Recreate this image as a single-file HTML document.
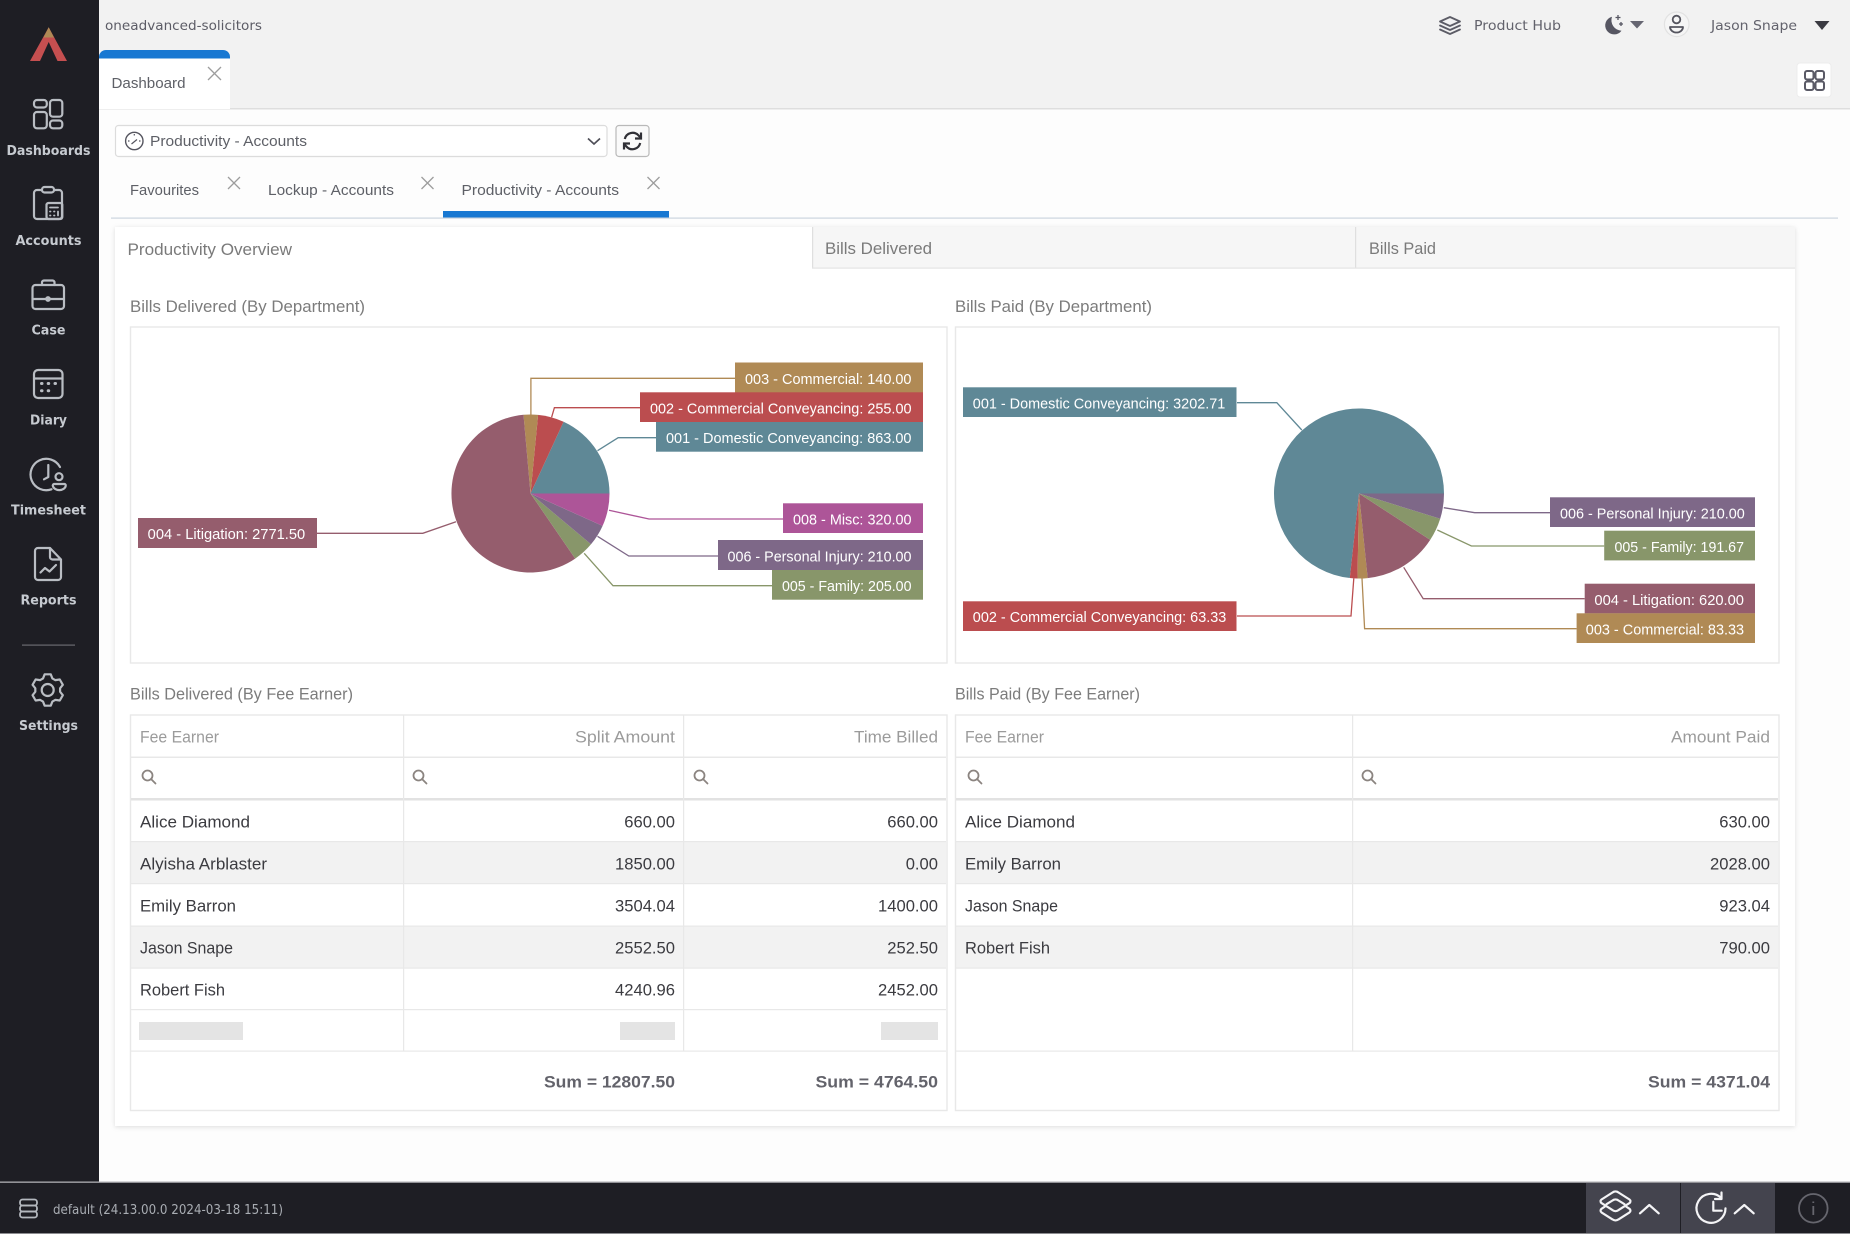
<!DOCTYPE html>
<html lang="en"><head><meta charset="utf-8"><title>Dashboard</title>
<style>
html,body{margin:0;padding:0;background:#fff;width:1850px;height:1234px;overflow:hidden}
svg{display:block}
text{font-family:"Liberation Sans",sans-serif;white-space:pre}
.m{font-family:"DejaVu Sans",sans-serif}
.nav{font-family:"DejaVu Sans",sans-serif;font-weight:700;font-size:13.5px;fill:#c6cad0;text-anchor:middle}
.ic{fill:none;stroke:#b9bdc3;stroke-width:2.2;stroke-linecap:round;stroke-linejoin:round}
.x{fill:none;stroke:#9d9d9d;stroke-width:1.3}
.tab{font-size:15px;fill:#5e6067}
.h{font-size:16.6px;fill:#7c7c7c}
.th{font-size:16.6px;fill:#9b9b9b}
.td{font-size:16.6px;fill:#3b3b40}
.r{text-anchor:end}
.sum{font-size:16.6px;font-weight:700;fill:#63636b;text-anchor:end}
.lb{font-size:14.6px;fill:#fff}
.ld{fill:none;stroke-width:1.3}
.b{fill:none;stroke:#e8e8e8;stroke-width:1.4}
.s{fill:none;stroke:#8b8480;stroke-width:1.8;stroke-linecap:round}
</style></head><body>
<svg xmlns="http://www.w3.org/2000/svg" width="1850" height="1234" viewBox="0 0 1850 1234">
<defs><filter id="sh" x="-2%" y="-2%" width="104%" height="104%"><feDropShadow dx="0" dy="1" stdDeviation="2.5" flood-color="#000" flood-opacity=".13"/></filter></defs>
<rect width="1850" height="1234" fill="#fdfdfd"/>

<!-- top bar -->
<rect x="99" y="0" width="1751" height="108" fill="#f2f2f2"/>
<rect x="99" y="108" width="1751" height="1.5" fill="#dedede"/>
<text class="m" x="105" y="30" font-size="13.5" fill="#5c5c66" textLength="157" lengthAdjust="spacingAndGlyphs">oneadvanced-solicitors</text>

<!-- app tab -->
<path d="M99 109V57a7 7 0 0 1 7-7h117a7 7 0 0 1 7 7v52z" fill="#fff"/>
<path d="M99 58.500V57a7 7 0 0 1 7-7h117a7 7 0 0 1 7 7v1.500z" fill="#1878d2"/>
<text class="tab" x="111.500" y="88" textLength="74" lengthAdjust="spacingAndGlyphs">Dashboard</text>
<path class="x" d="M208 67l13 13M221 67l-13 13"/>

<!-- top right -->
<g fill="none" stroke="#5c5c66" stroke-width="1.8" stroke-linejoin="round" stroke-linecap="round">
<path d="M1450 17l10 4.500-10 4.500-10-4.500z"/><path d="M1440 25.500l10 4.500 10-4.500"/><path d="M1440 29.500l10 4.500 10-4.500"/>
</g>
<text class="m" x="1474" y="30" font-size="13.500" fill="#62626c" textLength="87" lengthAdjust="spacingAndGlyphs">Product Hub</text>
<path d="M1612 16.700a9 9 0 1 0 9.500 14a10.500 10.500 0 0 1-9.500-14z" fill="#565662"/>
<path d="M1618 15v5M1615.500 17.500h5M1621 22v4M1619 24h4" stroke="#565662" stroke-width="1.300"/>
<path d="M1630 21h14l-7 7.500z" fill="#666672"/>
<circle cx="1676.700" cy="24.300" r="12.300" fill="#f5f5f5" stroke="#e2e2e2" stroke-width="1.200"/>
<circle cx="1676.500" cy="19.500" r="3.800" fill="none" stroke="#55555f" stroke-width="1.800"/>
<path d="M1670 27h13a6.500 5.500 0 0 1-13 0z" fill="none" stroke="#55555f" stroke-width="1.800" stroke-linejoin="round"/>
<text class="m" x="1711" y="30" font-size="13.500" fill="#62626c" textLength="86" lengthAdjust="spacingAndGlyphs">Jason Snape</text>
<path d="M1814.500 21h15l-7.500 9z" fill="#3b3b42"/>
<rect x="1797" y="63" width="34" height="34" rx="3" fill="#fff" stroke="#ececec"/>
<g fill="none" stroke="#5a5a66" stroke-width="2"><rect x="1805" y="71" width="8.500" height="8.500" rx="2"/><rect x="1815.500" y="71" width="8.500" height="8.500" rx="2"/><rect x="1805" y="81.500" width="8.500" height="8.500" rx="2"/><rect x="1815.500" y="81.500" width="8.500" height="8.500" rx="2"/></g>

<!-- sidebar -->
<rect x="0" y="0" width="99" height="1234" fill="#1e1e24"/>
<path d="M48.700 27.300L67 61H57.500L48.700 42 40 61H30z" fill="#c54f50"/>
<path d="M48.700 27.300L54 37.500H43.500z" fill="#ae8a55"/>

<g class="ic">
<rect x="34" y="100" width="12.800" height="7.500" rx="3"/><rect x="34" y="112" width="12.800" height="16.300" rx="3"/><rect x="50" y="100" width="12.300" height="16.700" rx="3"/><rect x="50" y="120.500" width="12.300" height="7.800" rx="3"/>
<path d="M42 190h-5a3 3 0 0 0-3 3v23a3 3 0 0 0 3 3h22a3 3 0 0 0 3-3v-23a3 3 0 0 0-3-3h-4"/><rect x="42" y="187" width="12" height="5.500" rx="2.500"/><rect x="46.500" y="203" width="15.800" height="16" rx="2"/>
<path d="M50 207.500h8M50 211.500h.5M54 211.500h.5M58 211.500v4M50 215.500h.5M54 215.500h.5" stroke-width="1.800"/>
<rect x="32.500" y="285" width="31.500" height="24" rx="3"/><path d="M42 285v-2.500a2 2 0 0 1 2-2h8.500a2 2 0 0 1 2 2v2.500M33 299h12M51 299h13"/><circle cx="48" cy="299" r="1.800" fill="#b9bdc3"/>
<rect x="34" y="370" width="28.500" height="28" rx="4"/><path d="M34 378.500h28.500"/><path d="M41.500 383.500h.5M48.200 383.500h.5M55 383.500h.5M41.500 390.700h.5M48.200 390.700h.5" stroke-width="3"/>
<path d="M60 467a15.700 15.700 0 1 0-8.500 22.300M48.300 465v12l-4.300 2.300"/><circle cx="59" cy="476.700" r="3.500"/><path d="M54 484h10.500a1.500 1.500 0 0 1 1.200 2 6.500 5 0 0 1-12.800 0 1.500 1.500 0 0 1 1.100-2z"/>
<path d="M50 548H38a3 3 0 0 0-3 3v26a3 3 0 0 0 3 3h20a3 3 0 0 0 3-3v-17.500zM50 548v9a2.500 2.500 0 0 0 2.500 2.500H61M40.500 572.500l4.500-4.500 4.500 3.500 6.500-6.500"/>
<path transform="translate(47.700 690)" d="M-4.680-11.590L-3.050-15.710H3.050L4.680-11.590 7.700-9.850 12.080-10.500 15.130-5.210 12.380-1.750V1.750L15.130 5.210 12.080 10.500 7.700 9.850 4.680 11.590 3.050 15.710H-3.050L-4.680 11.590-7.700 9.850-12.080 10.500-15.130 5.210-12.380 1.750V-1.750L-15.130-5.210-12.080-10.500-7.700-9.850z"/>
<circle cx="47.700" cy="690" r="6"/>
</g>
<text class="nav" x="48.500" y="155" textLength="84" lengthAdjust="spacingAndGlyphs">Dashboards</text>
<text class="nav" x="48.500" y="245" textLength="66" lengthAdjust="spacingAndGlyphs">Accounts</text>
<text class="nav" x="48.500" y="334.500" textLength="34" lengthAdjust="spacingAndGlyphs">Case</text>
<text class="nav" x="48.500" y="424.500" textLength="37" lengthAdjust="spacingAndGlyphs">Diary</text>
<text class="nav" x="48.500" y="514.500" textLength="75" lengthAdjust="spacingAndGlyphs">Timesheet</text>
<text class="nav" x="48.500" y="604.500" textLength="56" lengthAdjust="spacingAndGlyphs">Reports</text>
<text class="nav" x="48.500" y="730" textLength="59" lengthAdjust="spacingAndGlyphs">Settings</text>
<rect x="22" y="644.500" width="53" height="1.200" fill="#6a6a70"/>

<!-- selector -->
<rect x="115.500" y="125.500" width="491.500" height="31" rx="3" fill="#fff" stroke="#dcdcdc" stroke-width="1.200"/>
<circle cx="134.300" cy="141" r="8.700" fill="none" stroke="#55555f" stroke-width="1.400"/>
<path d="M131.500 144l5.500-4.500M134.300 134v1.500M128 141h1.500M139 141h1.500" stroke="#55555f" stroke-width="1.200" fill="none"/>
<text class="tab" x="150" y="146" textLength="157" lengthAdjust="spacingAndGlyphs">Productivity - Accounts</text>
<path d="M588 138.500l6 5.500 6-5.500" fill="none" stroke="#4f4f58" stroke-width="1.700"/>
<rect x="616" y="125.500" width="33" height="31" rx="3" fill="#fafafa" stroke="#b9b9b9" stroke-width="1.200"/>
<g fill="none" stroke="#303036" stroke-width="2.200"><path d="M624.800 139a8 8 0 0 1 13.800-3.500l2.400 2.500"/><path d="M641 132.500v6h-6"/><path d="M640.200 143a8 8 0 0 1-13.800 3.500l-2.400-2.500"/><path d="M624 149.500v-6h6"/></g>

<!-- sub tabs -->
<text class="tab" x="130" y="195" textLength="69" lengthAdjust="spacingAndGlyphs">Favourites</text>
<path class="x" d="M228 177l12 12M240 177l-12 12"/>
<text class="tab" x="268" y="195" textLength="126" lengthAdjust="spacingAndGlyphs">Lockup - Accounts</text>
<path class="x" d="M421.500 177l12 12M433.500 177l-12 12"/>
<text class="tab" x="461.500" y="195" textLength="157.500" lengthAdjust="spacingAndGlyphs">Productivity - Accounts</text>
<path class="x" d="M647.500 177l12 12M659.500 177l-12 12"/>
<rect x="111" y="217.500" width="1727" height="1.200" fill="#ccd5df"/>
<rect x="443" y="211" width="226" height="6.500" fill="#1878d2"/>

<!-- card -->
<rect x="115" y="227" width="1680" height="899" fill="#fff" filter="url(#sh)"/>
<rect x="812" y="227" width="983" height="41" fill="#f6f6f6"/>
<rect x="812" y="227" width="1.200" height="41" fill="#dfdfdf"/>
<rect x="1355" y="227" width="1.200" height="41" fill="#dfdfdf"/>
<rect x="812" y="267.500" width="983" height="1.200" fill="#e4e4e4"/>
<text x="127.500" y="255" font-size="17" fill="#7a7a7a" textLength="164.500" lengthAdjust="spacingAndGlyphs">Productivity Overview</text>
<text x="825" y="254" font-size="17" fill="#7a7a7a" textLength="107" lengthAdjust="spacingAndGlyphs">Bills Delivered</text>
<text x="1369" y="254" font-size="17" fill="#7a7a7a" textLength="67" lengthAdjust="spacingAndGlyphs">Bills Paid</text>

<text class="h" x="130" y="312" textLength="235" lengthAdjust="spacingAndGlyphs">Bills Delivered (By Department)</text>
<text class="h" x="955" y="312" textLength="197" lengthAdjust="spacingAndGlyphs">Bills Paid (By Department)</text>
<rect class="b" x="130.500" y="327" width="816.500" height="336"/>
<rect class="b" x="955.500" y="327" width="823.500" height="336"/>

<!-- left pie -->
<g>
<path d="M530.500 493.500L609.500 493.500A79 79 0 0 0 563.600 421.800z" fill="#5f8896"/>
<path d="M530.500 493.500L563.600 421.800A79 79 0 0 0 538.100 414.900z" fill="#bb4d4f"/>
<path d="M530.500 493.500L538.100 414.900A79 79 0 0 0 523.500 414.800z" fill="#b08a55"/>
<path d="M530.500 493.500L523.500 414.800A79 79 0 1 0 575.200 558.600z" fill="#955d6d"/>
<path d="M530.500 493.500L575.200 558.600A79 79 0 0 0 591 544.300z" fill="#88966a"/>
<path d="M530.500 493.500L591 544.300A79 79 0 0 0 602.600 525.900z" fill="#7e6888"/>
<path d="M530.500 493.500L602.600 525.900A79 79 0 0 0 609.500 493.500z" fill="#ad5598"/>
</g>
<g class="ld">
<path stroke="#b08a55" d="M530.900 415V378.300H735"/>
<path stroke="#bb4d4f" d="M551.600 417.300L554.400 407.700H640"/>
<path stroke="#5f8896" d="M597.500 450.700L618.200 437.700H656"/>
<path stroke="#ad5598" d="M609 510.300L649 519H783"/>
<path stroke="#7e6888" d="M597.500 536.300L628.800 556H718"/>
<path stroke="#88966a" d="M584.200 553.300L613 585.700H772"/>
<path stroke="#955d6d" d="M456 521.700L422.800 533.300H317"/>
</g>
<rect x="735" y="362.500" width="188" height="30" fill="#b08a55"/>
<rect x="640" y="392.300" width="283" height="29.700" fill="#bb4d4f"/>
<rect x="656" y="422" width="267" height="29.700" fill="#5f8896"/>
<rect x="783" y="503.300" width="140" height="29.700" fill="#ad5598"/>
<rect x="718" y="540" width="205" height="30" fill="#7e6888"/>
<rect x="772" y="570" width="151" height="29.700" fill="#88966a"/>
<rect x="138" y="518" width="179" height="30" fill="#955d6d"/>
<text class="lb" x="745" y="384" textLength="166.500" lengthAdjust="spacingAndGlyphs">003 - Commercial: 140.00</text>
<text class="lb" x="650" y="413.500" textLength="261.500" lengthAdjust="spacingAndGlyphs">002 - Commercial Conveyancing: 255.00</text>
<text class="lb" x="666" y="443" textLength="245.500" lengthAdjust="spacingAndGlyphs">001 - Domestic Conveyancing: 863.00</text>
<text class="lb" x="793" y="524.500" textLength="118.500" lengthAdjust="spacingAndGlyphs">008 - Misc: 320.00</text>
<text class="lb" x="727.500" y="561.500" textLength="184" lengthAdjust="spacingAndGlyphs">006 - Personal Injury: 210.00</text>
<text class="lb" x="782" y="591" textLength="129.500" lengthAdjust="spacingAndGlyphs">005 - Family: 205.00</text>
<text class="lb" x="147.700" y="539" textLength="157.500" lengthAdjust="spacingAndGlyphs">004 - Litigation: 2771.50</text>

<!-- right pie -->
<g>
<path d="M1359 493.500L1444 493.500A85 85 0 1 0 1349.800 578z" fill="#5f8896"/>
<path d="M1359 493.500L1349.800 578A85 85 0 0 0 1357.500 578.500z" fill="#bb4d4f"/>
<path d="M1359 493.500L1357.500 578.500A85 85 0 0 0 1367.700 578.100z" fill="#b08a55"/>
<path d="M1359 493.500L1367.700 578.100A85 85 0 0 0 1430.200 539.900z" fill="#955d6d"/>
<path d="M1359 493.500L1430.200 539.900A85 85 0 0 0 1440.200 518.800z" fill="#88966a"/>
<path d="M1359 493.500L1440.200 518.800A85 85 0 0 0 1444 493.500z" fill="#7e6888"/>
</g>
<g class="ld">
<path stroke="#5f8896" d="M1237 402.700H1276.800L1301.800 430"/>
<path stroke="#bb4d4f" d="M1237 616H1351L1353.800 578.300"/>
<path stroke="#b08a55" d="M1576.600 628.700H1364.600L1362 578.300"/>
<path stroke="#955d6d" d="M1584.700 598.700H1423.200L1403.700 567.300"/>
<path stroke="#88966a" d="M1604.200 546H1471.400L1437.300 530"/>
<path stroke="#7e6888" d="M1550 512.700H1474.700L1443.800 507.700"/>
</g>
<rect x="963" y="387.300" width="273.500" height="29.700" fill="#5f8896"/>
<rect x="963" y="601.300" width="273.500" height="29.700" fill="#bb4d4f"/>
<rect x="1550" y="497.300" width="205" height="29.700" fill="#7e6888"/>
<rect x="1604.200" y="530.700" width="150.800" height="29.700" fill="#88966a"/>
<rect x="1584.700" y="583.700" width="170.300" height="29.700" fill="#955d6d"/>
<rect x="1576.600" y="613.300" width="178.400" height="29.700" fill="#b08a55"/>
<text class="lb" x="972.800" y="408.500" textLength="252.500" lengthAdjust="spacingAndGlyphs">001 - Domestic Conveyancing: 3202.71</text>
<text class="lb" x="972.800" y="622" textLength="253.500" lengthAdjust="spacingAndGlyphs">002 - Commercial Conveyancing: 63.33</text>
<text class="lb" x="1560" y="518.500" textLength="184.800" lengthAdjust="spacingAndGlyphs">006 - Personal Injury: 210.00</text>
<text class="lb" x="1614.500" y="552" textLength="129.500" lengthAdjust="spacingAndGlyphs">005 - Family: 191.67</text>
<text class="lb" x="1594.400" y="605" textLength="149.600" lengthAdjust="spacingAndGlyphs">004 - Litigation: 620.00</text>
<text class="lb" x="1585.800" y="634.500" textLength="158.300" lengthAdjust="spacingAndGlyphs">003 - Commercial: 83.33</text>

<!-- left table -->
<text class="h" x="130" y="699.500" textLength="223" lengthAdjust="spacingAndGlyphs">Bills Delivered (By Fee Earner)</text>
<rect x="131" y="842" width="815" height="42" fill="#f2f2f2"/>
<rect x="131" y="926" width="815" height="42" fill="#f2f2f2"/>
<rect x="130.500" y="715" width="816.500" height="395.500" class="b"/>
<g fill="#e8e8e8">
<rect x="131" y="756.500" width="815" height="1.500"/><rect x="131" y="798" width="815" height="2.500" fill="#e2e2e2"/>
<rect x="131" y="841" width="815" height="1.200"/><rect x="131" y="883" width="815" height="1.200"/><rect x="131" y="925.500" width="815" height="1.200"/><rect x="131" y="967.500" width="815" height="1.200"/><rect x="131" y="1009" width="815" height="1.200"/><rect x="131" y="1050.500" width="815" height="1.200"/>
<rect x="403" y="715" width="1.200" height="336"/><rect x="683" y="715" width="1.200" height="336"/>
</g>
<text class="th" x="140" y="742.500" textLength="79" lengthAdjust="spacingAndGlyphs">Fee Earner</text>
<text class="th r" x="675" y="742.500" textLength="100" lengthAdjust="spacingAndGlyphs">Split Amount</text>
<text class="th r" x="938" y="742.500" textLength="84" lengthAdjust="spacingAndGlyphs">Time Billed</text>
<g class="s"><circle cx="147.500" cy="775.500" r="5"/><path d="M151 779l4.500 4.500"/><circle cx="418.500" cy="775.500" r="5"/><path d="M422 779l4.500 4.500"/><circle cx="699.500" cy="775.500" r="5"/><path d="M703 779l4.500 4.500"/></g>

<text class="td" x="140" y="827.500" textLength="110" lengthAdjust="spacingAndGlyphs">Alice Diamond</text>
<text class="td" x="140" y="869.500" textLength="127" lengthAdjust="spacingAndGlyphs">Alyisha Arblaster</text>
<text class="td" x="140" y="911.500" textLength="96" lengthAdjust="spacingAndGlyphs">Emily Barron</text>
<text class="td" x="140" y="953.500" textLength="93" lengthAdjust="spacingAndGlyphs">Jason Snape</text>
<text class="td" x="140" y="995.500" textLength="85" lengthAdjust="spacingAndGlyphs">Robert Fish</text>
<text class="td r" x="675" y="827.500">660.00</text><text class="td r" x="938" y="827.500">660.00</text>
<text class="td r" x="675" y="869.500">1850.00</text><text class="td r" x="938" y="869.500">0.00</text>
<text class="td r" x="675" y="911.500">3504.04</text><text class="td r" x="938" y="911.500">1400.00</text>
<text class="td r" x="675" y="953.500">2552.50</text><text class="td r" x="938" y="953.500">252.50</text>
<text class="td r" x="675" y="995.500">4240.96</text><text class="td r" x="938" y="995.500">2452.00</text>
<g fill="#e4e4e4"><rect x="139" y="1022" width="104" height="18"/><rect x="620" y="1022" width="55" height="18"/><rect x="881" y="1022" width="57" height="18"/></g>
<text class="sum" x="675" y="1087.500" textLength="131" lengthAdjust="spacingAndGlyphs">Sum = 12807.50</text>
<text class="sum" x="938" y="1087.500" textLength="122.500" lengthAdjust="spacingAndGlyphs">Sum = 4764.50</text>

<!-- right table -->
<text class="h" x="955" y="699.500" textLength="185" lengthAdjust="spacingAndGlyphs">Bills Paid (By Fee Earner)</text>
<rect x="956" y="842" width="822" height="42" fill="#f2f2f2"/>
<rect x="956" y="926" width="822" height="42" fill="#f2f2f2"/>
<rect x="955.500" y="715" width="823.500" height="395.500" class="b"/>
<g fill="#e8e8e8">
<rect x="956" y="756.500" width="822" height="1.500"/><rect x="956" y="798" width="822" height="2.500" fill="#e2e2e2"/>
<rect x="956" y="841" width="822" height="1.200"/><rect x="956" y="883" width="822" height="1.200"/><rect x="956" y="925.500" width="822" height="1.200"/><rect x="956" y="967.500" width="822" height="1.200"/><rect x="956" y="1050.500" width="822" height="1.200"/>
<rect x="1352" y="715" width="1.200" height="336"/>
</g>
<text class="th" x="965" y="742.500" textLength="79" lengthAdjust="spacingAndGlyphs">Fee Earner</text>
<text class="th r" x="1770" y="742.500" textLength="99" lengthAdjust="spacingAndGlyphs">Amount Paid</text>
<g class="s"><circle cx="973.500" cy="775.500" r="5"/><path d="M977 779l4.500 4.500"/><circle cx="1367.500" cy="775.500" r="5"/><path d="M1371 779l4.500 4.500"/></g>
<text class="td" x="965" y="827.500" textLength="110" lengthAdjust="spacingAndGlyphs">Alice Diamond</text>
<text class="td" x="965" y="869.500" textLength="96" lengthAdjust="spacingAndGlyphs">Emily Barron</text>
<text class="td" x="965" y="911.500" textLength="93" lengthAdjust="spacingAndGlyphs">Jason Snape</text>
<text class="td" x="965" y="953.500" textLength="85" lengthAdjust="spacingAndGlyphs">Robert Fish</text>
<text class="td r" x="1770" y="827.500">630.00</text>
<text class="td r" x="1770" y="869.500">2028.00</text>
<text class="td r" x="1770" y="911.500">923.04</text>
<text class="td r" x="1770" y="953.500">790.00</text>
<text class="sum" x="1770" y="1087.500" textLength="122" lengthAdjust="spacingAndGlyphs">Sum = 4371.04</text>

<!-- bottom bar -->
<rect x="0" y="1182" width="1850" height="52" fill="#1e1e24"/>
<rect x="0" y="1181.500" width="1850" height="1.300" fill="#b0b0b4"/>
<rect x="0" y="1233" width="1850" height="1" fill="#8c8c90"/>
<rect x="1586" y="1183" width="94" height="50" fill="#44444e"/>
<rect x="1681" y="1183" width="94" height="50" fill="#44444e"/>
<g fill="none" stroke="#b4b8be" stroke-width="1.800"><rect x="20" y="1199.500" width="17" height="6" rx="2.500"/><rect x="20" y="1205.500" width="17" height="6" rx="2.500"/><rect x="20" y="1211.500" width="17" height="6" rx="2.500"/></g>
<text class="m" x="53" y="1214" font-size="13" fill="#a9adb3" textLength="230" lengthAdjust="spacingAndGlyphs">default (24.13.00.0 2024-03-18 15:11)</text>
<g fill="none" stroke="#f4f4f6" stroke-width="2.200" stroke-linecap="round" stroke-linejoin="round">
<path d="M1612.500 1192.500a5 5 0 0 1 6 0l11 7a2.200 2.200 0 0 1 0 3.600l-11 7a5 5 0 0 1-6 0l-11-7a2.200 2.200 0 0 1 0-3.600z"/>
<path d="M1606.500 1204.200l6-3.700a5 5 0 0 1 6 0l6 3.700"/>
<path d="M1605 1206.500l-3.500 2.300a2.200 2.200 0 0 0 0 3.600l11 7a5 5 0 0 0 6 0l11-7a2.200 2.200 0 0 0 0-3.600l-3.500-2.300"/>
<path d="M1640 1213.300l9.300-8.300 9.400 8.300"/>
<path d="M1725.500 1208.300a14.500 14.500 0 1 1-4.200-10.200"/>
<path d="M1721.500 1192.500v6.500h-6.500"/>
<path d="M1713.300 1201.700v9h8.400"/>
<path d="M1734.700 1213.300l9.600-8.300 9.400 8.300"/>
</g>
<circle cx="1813.300" cy="1208.300" r="14.300" fill="none" stroke="#66666e" stroke-width="1.800"/>
<path d="M1813.300 1206v9M1813.300 1201.500v1.500" stroke="#66666e" stroke-width="1.800"/>
</svg>
</body></html>
